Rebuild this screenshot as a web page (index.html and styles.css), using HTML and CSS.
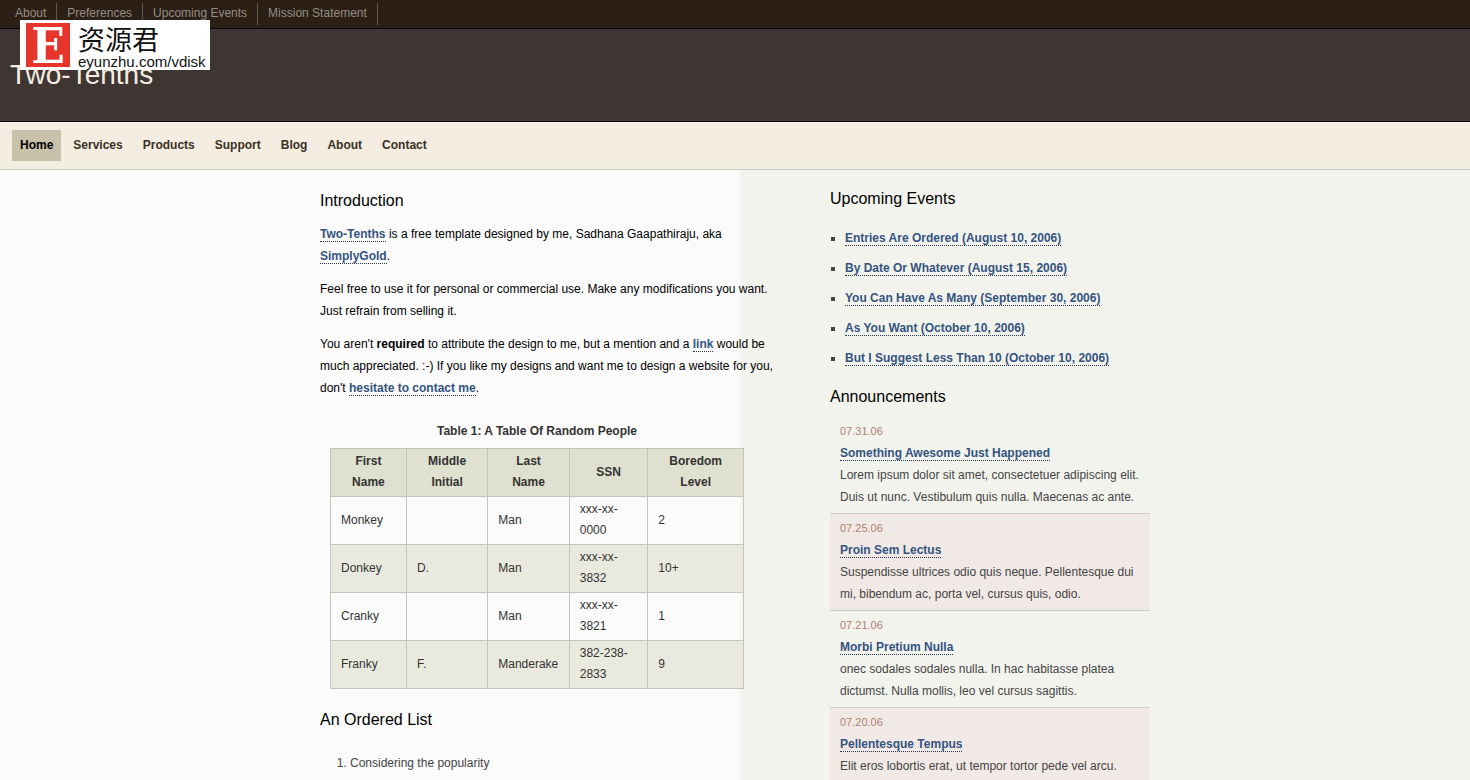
FILE: index.html
```html
<!DOCTYPE html>
<html lang="en">
<head>
<meta charset="utf-8">
<title>Two-Tenths</title>
<link rel="stylesheet" href="styles.css">
</head>
<body>
<div class="watermark">
  <span class="watermark-mark">E</span>
  <span class="watermark-text">
    <span class="watermark-name" lang="zh">资源君</span>
    <span class="watermark-url">eyunzhu.com/vdisk</span>
  </span>
</div>
<ul class="topbar">
  <li><a href="#">About</a></li>
  <li><a href="#">Preferences</a></li>
  <li><a href="#">Upcoming Events</a></li>
  <li><a href="#">Mission Statement</a></li>
</ul>
<header class="header">
  <h1>Two-Tenths</h1>
</header>
<nav class="nav">
  <a class="active" href="#">Home</a>
  <a href="#">Services</a>
  <a href="#">Products</a>
  <a href="#">Support</a>
  <a href="#">Blog</a>
  <a href="#">About</a>
  <a href="#">Contact</a>
</nav>
<div class="page">
  <div class="content">
    <main class="main">
      <h2>Introduction</h2>
      <p><a class="link" href="#">Two-Tenths</a> is a free template designed by me, Sadhana Gaapathiraju, aka <a class="link" href="#">SimplyGold</a>.</p>
      <p>Feel free to use it for personal or commercial use. Make any modifications you want. Just refrain from selling it.</p>
      <p>You aren't <strong>required</strong> to attribute the design to me, but a mention and a <a class="link" href="#">link</a> would be much appreciated. :-) If you like my designs and want me to design a website for you, don't <a class="link" href="#">hesitate to contact me</a>.</p>
      <table class="people">
        <caption>Table 1: A Table Of Random People</caption>
        <thead>
          <tr><th>First Name</th><th>Middle Initial</th><th>Last Name</th><th>SSN</th><th>Boredom Level</th></tr>
        </thead>
        <tbody>
          <tr><td>Monkey</td><td></td><td>Man</td><td>xxx-xx-0000</td><td>2</td></tr>
          <tr><td>Donkey</td><td>D.</td><td>Man</td><td>xxx-xx-3832</td><td>10+</td></tr>
          <tr><td>Cranky</td><td></td><td>Man</td><td>xxx-xx-3821</td><td>1</td></tr>
          <tr><td>Franky</td><td>F.</td><td>Manderake</td><td>382-238-2833</td><td>9</td></tr>
        </tbody>
      </table>
      <h2>An Ordered List</h2>
      <ol class="ordered">
        <li>Considering the popularity</li>
      </ol>
    </main>
    <aside class="sidebar">
      <h2>Upcoming Events</h2>
      <ul class="events">
        <li><a class="link" href="#">Entries Are Ordered (August 10, 2006)</a></li>
        <li><a class="link" href="#">By Date Or Whatever (August 15, 2006)</a></li>
        <li><a class="link" href="#">You Can Have As Many (September 30, 2006)</a></li>
        <li><a class="link" href="#">As You Want (October 10, 2006)</a></li>
        <li><a class="link" href="#">But I Suggest Less Than 10 (October 10, 2006)</a></li>
      </ul>
      <h2>Announcements</h2>
      <ul class="news">
        <li><span class="date">07.31.06</span><a class="link" href="#">Something Awesome Just Happened</a><br>Lorem ipsum dolor sit amet, consectetuer adipiscing elit. Duis ut nunc. Vestibulum quis nulla. Maecenas ac ante.</li>
        <li><span class="date">07.25.06</span><a class="link" href="#">Proin Sem Lectus</a><br>Suspendisse ultrices odio quis neque. Pellentesque dui mi, bibendum ac, porta vel, cursus quis, odio.</li>
        <li><span class="date">07.21.06</span><a class="link" href="#">Morbi Pretium Nulla</a><br>onec sodales sodales nulla. In hac habitasse platea dictumst. Nulla mollis, leo vel cursus sagittis.</li>
        <li><span class="date">07.20.06</span><a class="link" href="#">Pellentesque Tempus</a><br>Elit eros lobortis erat, ut tempor tortor pede vel arcu.</li>
      </ul>
    </aside>
  </div>
</div>
</body>
</html>
```
FILE: styles.css
```css
* {
  box-sizing: border-box;
}

body {
  margin: 0;
  min-height: 100vh;
  display: flex;
  flex-direction: column;
  font: 12px/22px "Liberation Sans", Arial, sans-serif;
  color: #000;
}

ul,
ol {
  margin: 0;
  padding: 0;
}

a {
  text-decoration: none;
}

.topbar {
  display: flex;
  padding: 3px 5px;
  list-style: none;
  background: #2b1f16;
  border-bottom: 1px solid #000;
}

.topbar li {
  padding: 0 10px 1px;
  border-right: 1px solid #5e5650;
  line-height: 21px;
}

.topbar a {
  color: #968d84;
}

.header {
  padding: 30px 10px 31px;
  background: #3f3532;
  border-bottom: 1px solid #000;
}

.header h1 {
  margin: 0;
  font-size: 28px;
  font-weight: normal;
  line-height: 31px;
  color: #f4eee2;
}

.nav {
  display: flex;
  gap: 4px;
  padding: 8px 12px;
  background: linear-gradient(#f5ece2, #f4ede0 70%, #f0f0e4);
  border-bottom: 1px solid #cccdc2;
}

.nav a {
  padding: 5px 8px;
  line-height: 21px;
  font-weight: bold;
  color: #3a3126;
}

.nav .active {
  color: #000;
  background: #c9c2ab;
}

.watermark {
  position: absolute;
  top: 20px;
  left: 20px;
  display: flex;
  gap: 8px;
  width: 190px;
  height: 50px;
  padding: 3px 0 3px 6px;
  background: #fff;
  color: #111;
}

.watermark-mark {
  width: 44px;
  height: 44px;
  background: #e8352b;
  color: #fff;
  font: bold 49px/46px "DejaVu Serif Condensed", "DejaVu Serif", serif;
  text-align: center;
}

.watermark-text {
  display: flex;
  flex-direction: column;
}

.watermark-name {
  font: 27px/31px "Noto Sans CJK SC", sans-serif;
}

.watermark-url {
  font-size: 15px;
  line-height: 15px;
}

.page {
  flex: 1;
  display: flex;
  justify-content: center;
  background: linear-gradient(90deg, #fbfbfb calc(50% + 3px), #f3f3ee calc(50% + 8px));
}

.content {
  display: flex;
  gap: 50px;
  width: 830px;
}

.main {
  flex: 460;
  padding-top: 20px;
}

.sidebar {
  flex: 320;
  padding-top: 18px;
  color: #444;
}

h2 {
  margin: 0;
  font-size: 16px;
  font-weight: normal;
  line-height: 22px;
  color: #000;
}

.main p {
  margin: 11px 0;
}

.link {
  font-weight: bold;
  color: #34547f;
  border-bottom: 1px dotted #24364f;
}

.people {
  width: 90%;
  margin: 22px 10px 20px;
  border-collapse: collapse;
  line-height: 21px;
  color: #333;
}

.people caption {
  padding-bottom: 6px;
  font-weight: bold;
}

.people th,
.people td {
  padding: 2px 10px 3px;
  border: 1px solid #c3c5b8;
}

.people td {
  text-align: left;
}

.people th {
  background: #dfe0cf;
}

.people tbody tr:nth-child(even) {
  background: #e9eadd;
}

.ordered {
  margin-top: 21px;
  padding-left: 30px;
  color: #444;
}

.events {
  margin: 13px 0;
  padding-left: 15px;
  list-style: square;
}

.events li {
  padding: 4px 0;
}

.news {
  margin-top: 9px;
  list-style: none;
}

.news li {
  padding: 3px 10px 5px;
  border-bottom: 1px solid #cccdc8;
}

.news li:nth-child(even) {
  background: #f1e9e5;
}

.news li:last-child {
  border-bottom: 0;
}

.date {
  display: block;
  font-size: 11px;
  color: #b07f70;
}
```
